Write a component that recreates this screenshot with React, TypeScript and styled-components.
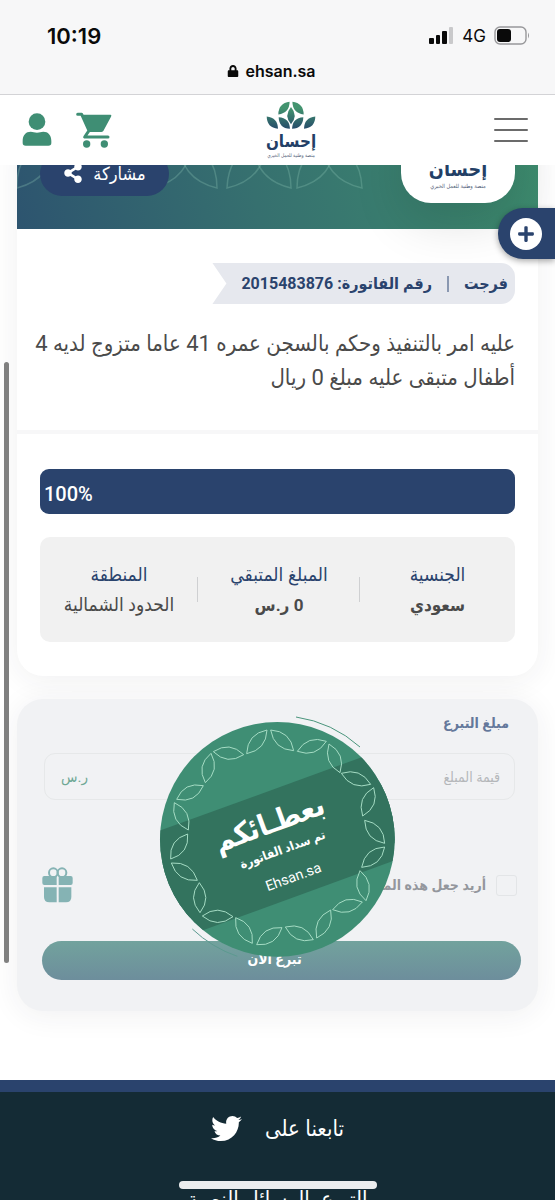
import React from "react";
import styled, { createGlobalStyle } from "styled-components";
import { FaLock, FaPlus, FaShareAlt, FaTwitter } from "react-icons/fa";

const navy = "#2a436d";
const green = "#3f8e74";
const sans = `Roboto, "DejaVu Sans Condensed", "DejaVu Sans", sans-serif`;

const GlobalStyle = createGlobalStyle`
  * { box-sizing: border-box; }
  body {
    margin: 0;
    background: #fff;
    font-family: ${sans};
    color: #4a4a4a;
    overflow-x: hidden;
  }
  button, input { font-family: inherit; }
`;

const Page = styled.div`
  position: relative;
  height: 100vh;
  overflow: hidden;
  display: flex;
  flex-direction: column;
`;

/* ---------- phone chrome ---------- */

const BrowserBar = styled.div`
  flex: none;
  position: relative;
  z-index: 3;
  background: #f7f7f8;
  border-bottom: 1px solid #d3d3d6;
  color: #0a0a0a;
  font-family: Inter, sans-serif;
`;

const StatusRow = styled.div`
  display: flex;
  justify-content: space-between;
  align-items: center;
  height: 60px;
  padding: 11px 25px 0 47px;
`;

const Clock = styled.time`
  font-size: 22px;
  font-weight: 600;
`;

const Indicators = styled.div`
  display: flex;
  align-items: center;
  gap: 8px;
  font-size: 17px;
`;

const AddressRow = styled.div`
  display: flex;
  justify-content: center;
  align-items: center;
  gap: 6px;
  height: 34px;
  padding: 0 12px 12px 0;
  font-size: 16px;
  font-weight: 600;
`;

const ScrollThumb = styled.div`
  position: absolute;
  z-index: 4;
  top: 362px;
  left: 4px;
  width: 5px;
  height: 601px;
  border-radius: 3px;
  background: #808080;
`;

const HomeIndicator = styled.div`
  position: absolute;
  z-index: 4;
  bottom: 11px;
  left: 50%;
  width: 198px;
  height: 8px;
  margin-left: -99px;
  border-radius: 4px;
  background: #ebedee;
`;

/* ---------- site header ---------- */

const SiteHeader = styled.header`
  flex: none;
  position: relative;
  z-index: 3;
  display: grid;
  grid-template-columns: 1fr auto 1fr;
  align-items: center;
  height: 70px;
  padding: 0 27px 0 22px;
  background: #fff;
`;

const HeaderIcons = styled.div`
  display: flex;
  gap: 24px;
`;

const IconButton = styled.button`
  display: block;
  padding: 0;
  border: 0;
  background: none;
  line-height: 0;
`;

const MenuButton = styled(IconButton)`
  justify-self: end;
  display: grid;
  gap: 9px;
  width: 34px;

  span {
    height: 2px;
    border-radius: 1px;
    background: #6b6b6b;
  }
`;

const LogoLink = styled.a`
  display: block;
  margin-left: 32px;
  line-height: 0;
`;

/* ---------- case card ---------- */

const Main = styled.main`
  flex: none;
  display: grid;
  gap: 23px;
  padding: 0 17px 69px;
  margin-top: -40px;
`;

const Card = styled.section`
  position: relative;
  border-radius: 26px;
  background: #fff;
  box-shadow: 0 4px 30px rgba(40, 40, 60, 0.07);
`;

const Banner = styled.div`
  position: relative;
  display: flex;
  justify-content: space-between;
  align-items: flex-end;
  height: 104px;
  padding: 0 23px 26px;
  background: linear-gradient(75deg, #2d546f 0%, #36706f 45%, #3b836f 80%, #3d8b6d 100%);
`;

const BannerPattern = styled.svg`
  position: absolute;
  inset: 0;
  width: 100%;
  height: 100%;
`;

const LogoTile = styled.div`
  position: relative;
  display: flex;
  justify-content: center;
  align-items: flex-end;
  width: 114px;
  height: 100px;
  padding-bottom: 14px;
  border-radius: 30px;
  background: #fff;
  box-shadow: 0 20px 50px rgba(0, 0, 0, 0.12);
`;

const ShareButton = styled.button`
  position: relative;
  display: flex;
  justify-content: center;
  align-items: center;
  gap: 10px;
  width: 129px;
  height: 44px;
  margin-bottom: 7px;
  padding: 0 0 2px;
  border: 0;
  border-radius: 22px;
  background: ${navy};
  color: #fff;
  font-size: 18px;
`;

const Summary = styled.div`
  padding: 34px 23px 35px;
  border-bottom: 4px solid #f7f7f8;
`;

const InvoiceTag = styled.div`
  display: flex;
  align-items: center;
  width: fit-content;
  height: 41px;
  padding: 0 7px 0 29px;
  border-radius: 0 14px 14px 0;
  background: #e6e8ee;
  clip-path: polygon(0 0, 100% 0, 100% 100%, 0 100%, 14px 50%);
  color: ${navy};
  font-size: 16px;
  font-weight: 700;
`;

const TagRule = styled.span`
  width: 2px;
  height: 16px;
  margin: 0 15px;
  background: #8a98b1;
`;

const Description = styled.p`
  margin: 23px 0 0 -8px;
  font-size: 22px;
  line-height: 34px;
`;

const Details = styled.div`
  display: grid;
  gap: 23px;
  padding: 35px 23px 34px;
`;

const ProgressTrack = styled.div`
  height: 45px;
  border-radius: 9px;
  background: #e8eaee;
`;

const ProgressFill = styled.div`
  display: flex;
  justify-content: flex-end;
  align-items: center;
  height: 100%;
  padding: 4px 4px 0;
  border-radius: 9px;
  background: ${navy};
  color: #fff;
  font-size: 20px;
  font-weight: 500;
`;

const Facts = styled.dl`
  display: grid;
  grid-template-columns: 155px 1fr 158px;
  margin: 0;
  padding: 23px 0 22px;
  border-radius: 10px;
  background: #f1f1f1;
`;

const Fact = styled.div`
  position: relative;
  text-align: center;

  & + &::before {
    content: "";
    position: absolute;
    right: 0;
    top: 17px;
    width: 1px;
    height: 25px;
    background: #cfd0d2;
  }
`;

const FactName = styled.dt`
  color: ${navy};
  font-size: 19px;
  line-height: 30px;
`;

const FactValue = styled.dd<{ $strong?: boolean }>`
  margin: 0;
  font-size: ${(p) => (p.$strong ? 17 : 19)}px;
  line-height: 30px;
  font-weight: ${(p) => (p.$strong ? 700 : 400)};
`;

/* ---------- donation form ---------- */

const DonationCard = styled(Card)`
  background: #f1f2f4;
`;

const Form = styled.form`
  padding: 11px 17px 31px 25px;
`;

const AmountLabel = styled.label`
  display: block;
  padding-right: 12px;
  color: #64789b;
  font-size: 14px;
  line-height: 27px;
  font-weight: 700;
`;

const AmountField = styled.div`
  display: flex;
  align-items: center;
  height: 47px;
  margin: 16px 6px 0 2px;
  padding: 0 14px 0 16px;
  border: 1px solid #e6e8e9;
  border-radius: 11px;
  color: #6fa895;
  font-size: 15px;
`;

const AmountInput = styled.input`
  flex: 1;
  min-width: 0;
  padding: 0;
  border: 0;
  background: none;
  font-size: 14px;
  outline: 0;

  &::placeholder { color: #b4b7ba; opacity: 1; }
`;

const GiftRow = styled.div`
  display: flex;
  justify-content: space-between;
  align-items: center;
  height: 40px;
  margin: 65px 4px 0 0;
`;

const GiftOption = styled.label`
  display: flex;
  align-items: center;
  gap: 10px;
  color: #94979d;
  font-size: 14px;
  font-weight: 700;
`;

const GiftCheckbox = styled.input`
  appearance: none;
  width: 21px;
  height: 21px;
  margin: 0;
  border: 1px solid #e3e5e7;
  border-radius: 3px;
`;

const DonateButton = styled.button`
  display: block;
  width: 100%;
  height: 39px;
  margin-top: 36px;
  padding: 0 14px 3px 0;
  border: 0;
  border-radius: 20px;
  background: linear-gradient(#72a29d, #6d8e9c);
  color: #fff;
  font-size: 14px;
  font-weight: 700;
`;

const PaidSeal = styled.svg`
  position: absolute;
  top: 1px;
  left: calc(50% - 128px);
  width: 260px;
  height: 270px;
`;

/* ---------- floating action and footer ---------- */

const QuickDonate = styled.button`
  position: absolute;
  z-index: 4;
  top: 208px;
  right: 0;
  display: flex;
  align-items: center;
  width: 57px;
  height: 51px;
  padding: 0 0 0 12px;
  border: 0;
  border-radius: 25px 0 0 25px;
  background: ${navy};
  box-shadow: 0 2px 6px rgba(0, 0, 0, 0.35);
`;

const PlusDisc = styled.span`
  display: grid;
  place-items: center;
  width: 32px;
  height: 32px;
  border-radius: 50%;
  background: #fff;
  color: ${navy};
  font-size: 18px;
`;

const Footer = styled.footer`
  flex: 1 0 auto;
  border-top: 12px solid ${navy};
  background: #142b35;
  color: #fff;
  text-align: center;
`;

const Follow = styled.div`
  display: flex;
  justify-content: center;
  align-items: center;
  gap: 23px;
  height: 72px;
  font-size: 22px;

  a { color: #fff; line-height: 0; }
`;

const FooterTitle = styled.h2`
  margin: 19px 0 0;
  font-size: 22px;
  line-height: 34px;
  font-weight: 400;
`;

/* ---------- drawings ---------- */

type Leaf = [number, number, number, number];

/** A leaf between two tips; bulge is its full width at the middle. */
const leafPath = ([x1, y1, x2, y2]: Leaf, bulge: number) => {
  const mx = (x1 + x2) / 2;
  const my = (y1 + y2) / 2;
  const len = Math.hypot(x2 - x1, y2 - y1);
  const nx = (-(y2 - y1) / len) * bulge;
  const ny = ((x2 - x1) / len) * bulge;
  return `M${x1} ${y1}Q${mx + nx} ${my + ny} ${x2} ${y2}Q${mx - nx} ${my - ny} ${x1} ${y1}Z`;
};

const logoLeaves: Leaf[] = [
  [71, 17, 71, 66],
  [35, 38, 67, 2],
  [75, 2, 107, 38],
  [36, 46, 68, 79],
  [106, 46, 74, 79],
  [2, 44, 34, 79],
  [140, 44, 108, 79],
];

const LogoSvg = styled.svg`
  overflow: visible;
`;

const Logo = ({ id, width }: { id: string; width: number }) => (
  <LogoSvg width={width} height={(width * 162) / 142} viewBox="0 0 142 162">
    <defs>
      <linearGradient id={id} gradientUnits="userSpaceOnUse" x1="0" y1="20" x2="0" y2="84">
        <stop offset="0" stopColor="#43946f" />
        <stop offset="1" stopColor="#24466a" />
      </linearGradient>
    </defs>
    <g fill={`url(#${id})`}>
      {logoLeaves.map((l, i) => (
        <path key={i} d={leafPath(l, 21)} />
      ))}
    </g>
    <text x="71" y="130" textAnchor="middle" direction="rtl" fontFamily={sans} fontSize="48" fontWeight="700" fill="#233f66">
      إحسان
    </text>
    <text x="71" y="159" textAnchor="middle" direction="rtl" fontFamily={sans} fontSize="14" fill="#55647c">
      منصة وطنية للعمل الخيري
    </text>
  </LogoSvg>
);

const UserIcon = () => (
  <svg width="30" height="34" viewBox="0 0 90 102" fill={green}>
    <circle cx="45" cy="26" r="25" />
    <path d="M2 84C2 66 12 56 26 56C33 56 37 59 45 59C53 59 57 56 64 56C78 56 88 66 88 84V90Q88 98 79 98H11Q2 98 2 90Z" />
  </svg>
);

const CartIcon = () => (
  <svg width="36" height="36" viewBox="0 0 108 108" fill="none">
    <path d="M5 7H17L39 56L26 75H96" stroke={green} strokeWidth="9" strokeLinecap="round" strokeLinejoin="round" />
    <path d="M17 8H104Q108 9 105 14L82 57Q79 60 76 60H38Z" fill={green} />
    <circle cx="32" cy="96" r="11" fill={green} />
    <circle cx="85" cy="96" r="11" fill={green} />
  </svg>
);

const GiftIcon = () => (
  <svg width="31" height="36" viewBox="0 0 93 108">
    <g fill="none" stroke="#85b3b4" strokeWidth="6">
      <circle cx="34" cy="17" r="13" />
      <circle cx="60" cy="17" r="13" />
    </g>
    <g fill="#85b3b4">
      <path d="M44 27V54H7Q1 54 1 48V33Q1 27 7 27Z" />
      <path d="M50 27H86Q92 27 92 33V48Q92 54 86 54H50Z" />
      <path d="M44 61V106H22Q6 106 6 90V61Z" />
      <path d="M50 61H88V90Q88 106 72 106H50Z" />
    </g>
  </svg>
);

const SignalIcon = () => (
  <svg width="25" height="17" viewBox="0 0 25 17" fill="#0a0a0a">
    <rect x="0" y="11" width="5" height="6" rx="1" />
    <rect x="7" y="8" width="4" height="9" rx="1" />
    <rect x="13" y="4" width="5" height="13" rx="1" />
    <rect x="20" y="0" width="4" height="17" rx="1" fill="#c9c9cb" />
  </svg>
);

const BatteryIcon = () => (
  <svg width="36" height="19" viewBox="0 0 36 19">
    <rect x="1" y="1" width="31" height="17" rx="5" fill="none" stroke="#98989b" strokeWidth="1.4" />
    <rect x="3" y="3" width="14" height="13" rx="3" fill="#0a0a0a" />
    <path d="M34 6.500Q36 9.500 34 12.500Z" fill="#98989b" />
  </svg>
);

const bannerLeaves: Leaf[] = [
  [-8, 63, -48, 15],
  [0, 63, 36, 15],
  [135, 63, 175, 15],
  [200, 63, 162, 15],
  [210, 63, 250, 15],
  [274, 63, 236, 15],
  [280, 63, 318, 15],
  [345, 63, 305, 15],
];

const sealLeaves: Leaf[] = [
  [351, 90, 290, 161],
  [362, 90, 431, 152],
  [442, 154, 529, 124],
  [537, 132, 570, 218],
  [574, 220, 662, 253],
  [671, 263, 638, 348],
  [644, 361, 704, 430],
  [704, 441, 635, 502],
  [630, 512, 648, 602],
  [637, 606, 548, 629],
  [542, 630, 500, 714],
  [490, 719, 406, 681],
  [396, 683, 320, 734],
  [307, 730, 257, 653],
  [249, 650, 157, 648],
  [150, 638, 148, 548],
  [142, 541, 64, 489],
  [62, 477, 113, 402],
  [115, 390, 73, 308],
  [80, 298, 160, 257],
  [166, 248, 183, 160],
  [190, 155, 281, 164],
];

const Seal = () => (
  <PaidSeal viewBox="0 0 780 810" role="img" aria-label="تم سداد الفاتورة">
    <defs>
      <clipPath id="sealDisc">
        <circle cx="382" cy="418" r="352" />
      </clipPath>
    </defs>
    <circle cx="382" cy="418" r="352" fill="#3f8e74" />
    <g clipPath="url(#sealDisc)">
      <rect x="-20" y="370" width="800" height="179" fill="#33735e" transform="rotate(-20 382 418)" />
      <rect x="-20" y="273" width="800" height="325" fill="#33735e" transform="rotate(-20 382 418)" />
    </g>
    <g fill="none" stroke="#a5dcc4" strokeWidth="3">
      {sealLeaves.map((l, i) => (
        <path key={i} d={leafPath(l, 37)} />
      ))}
    </g>
    <g fill="none" strokeWidth="3">
      <path d="M438 51A371 371 0 0 1 630 141" stroke="#4a957c" />
      <path d="M127 687A371 371 0 0 0 262 769" stroke="#5c9a90" />
    </g>
    <g fill="#fff" fontFamily={sans} textAnchor="middle">
      <text direction="rtl" fontSize="88" fontWeight="700" transform="translate(368 398) rotate(-20)">
        بعطـائكم
      </text>
      <text direction="rtl" fontSize="37" fontWeight="700" transform="translate(402 460) rotate(-20)">
        تم سداد الفاتورة
      </text>
      <text fontSize="43" transform="translate(435 544) rotate(-20)">
        Ehsan.sa
      </text>
    </g>
  </PaidSeal>
);

export default function App() {
  return (
    <Page>
      <GlobalStyle />
      <BrowserBar>
        <StatusRow>
          <Clock>10:19</Clock>
          <Indicators>
            <SignalIcon />
            4G
            <BatteryIcon />
          </Indicators>
        </StatusRow>
        <AddressRow>
          <FaLock size={12} />
          ehsan.sa
        </AddressRow>
      </BrowserBar>

      <SiteHeader>
        <HeaderIcons>
          <IconButton aria-label="حسابي">
            <UserIcon />
          </IconButton>
          <IconButton aria-label="السلة">
            <CartIcon />
          </IconButton>
        </HeaderIcons>
        <LogoLink href="#" aria-label="إحسان">
          <Logo id="logoTop" width={50} />
        </LogoLink>
        <MenuButton aria-label="القائمة">
          <span />
          <span />
          <span />
        </MenuButton>
      </SiteHeader>

      <Main dir="rtl" lang="ar">
        <Card>
          <Banner>
            <BannerPattern viewBox="0 0 521 104" preserveAspectRatio="xMidYMid slice">
              <g fill="none" stroke="#8fc7b5" strokeOpacity="0.3" strokeWidth="1.5">
                {bannerLeaves.map((l, i) => (
                  <path key={i} d={leafPath(l, 24)} />
                ))}
              </g>
            </BannerPattern>
            <LogoTile>
              <Logo id="logoTile" width={58} />
            </LogoTile>
            <ShareButton>
              مشاركة
              <FaShareAlt size={20} />
            </ShareButton>
          </Banner>
          <Summary>
            <InvoiceTag>
              <span>فرجت</span>
              <TagRule />
              <span>رقم الفاتورة: 2015483876</span>
            </InvoiceTag>
            <Description>
              عليه امر بالتنفيذ وحكم بالسجن عمره 41 عاما متزوج لديه 4 أطفال متبقى عليه مبلغ 0 ريال
            </Description>
          </Summary>
          <Details>
            <ProgressTrack>
              <ProgressFill>
                <span dir="ltr">100%</span>
              </ProgressFill>
            </ProgressTrack>
            <Facts>
              <Fact>
                <FactName>الجنسية</FactName>
                <FactValue $strong>سعودي</FactValue>
              </Fact>
              <Fact>
                <FactName>المبلغ المتبقي</FactName>
                <FactValue $strong>0 ر.س</FactValue>
              </Fact>
              <Fact>
                <FactName>المنطقة</FactName>
                <FactValue>الحدود الشمالية</FactValue>
              </Fact>
            </Facts>
          </Details>
        </Card>

        <DonationCard>
          <Form onSubmit={(e) => e.preventDefault()}>
            <AmountLabel htmlFor="amount">مبلغ التبرع</AmountLabel>
            <AmountField>
              <AmountInput id="amount" inputMode="numeric" placeholder="قيمة المبلغ" />
              <span>ر.س</span>
            </AmountField>
            <GiftRow>
              <GiftOption>
                <GiftCheckbox type="checkbox" />
                أريد جعل هذه المساهمة
              </GiftOption>
              <GiftIcon />
            </GiftRow>
            <DonateButton type="submit">تبرع الان</DonateButton>
          </Form>
          <Seal />
        </DonationCard>
      </Main>

      <Footer dir="rtl" lang="ar">
        <Follow>
          تابعنا على
          <a href="#" aria-label="تويتر">
            <FaTwitter size={31} />
          </a>
        </Follow>
        <FooterTitle>التبرع بالرسائل النصية</FooterTitle>
      </Footer>

      <QuickDonate aria-label="تبرع سريع">
        <PlusDisc>
          <FaPlus />
        </PlusDisc>
      </QuickDonate>
      <ScrollThumb />
      <HomeIndicator />
    </Page>
  );
}
